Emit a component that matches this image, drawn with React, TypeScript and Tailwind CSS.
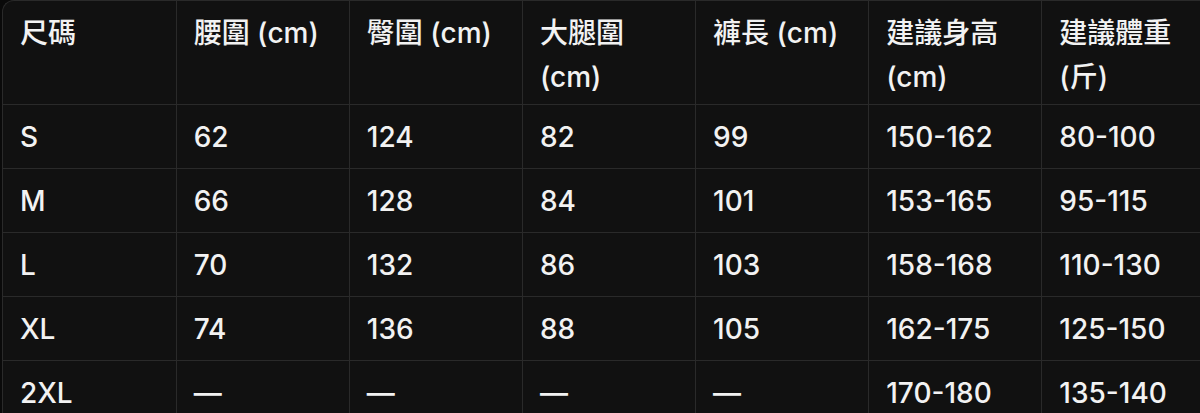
const headers: string[][] = [
  ["尺碼"],
  ["腰圍 (cm)"],
  ["臀圍 (cm)"],
  ["大腿圍", "(cm)"],
  ["褲長 (cm)"],
  ["建議身高", "(cm)"],
  ["建議體重", "(斤)"],
];

const rows: string[][] = [
  ["S", "62", "124", "82", "99", "150-162", "80-100"],
  ["M", "66", "128", "84", "101", "153-165", "95-115"],
  ["L", "70", "132", "86", "103", "158-168", "110-130"],
  ["XL", "74", "136", "88", "105", "162-175", "125-150"],
  ["2XL", "—", "—", "—", "—", "170-180", "135-140"],
];

export default function App() {
  return (
    <div
      className="w-[1200px] h-[413px] overflow-hidden bg-[#0a0a0a] text-[#f2f2f2]"
      style={{ fontFamily: '"Inter", "Noto Sans CJK TC", sans-serif' }}
    >
      <div className="ml-[2px] w-[1213px] rounded-tl-xl border-l border-t border-[#2a2a2a] bg-[#111111]">
        <table className="w-full table-fixed border-collapse text-[28px]">
          <thead>
            <tr className="border-b border-[#2a2a2a]">
              {headers.map((h, i) => (
                <th
                  key={i}
                  className={`h-[103px] px-[17px] pt-[10px] pb-[5px] text-left align-top font-medium leading-[44px] ${
                    i > 0 ? "border-l border-[#2a2a2a]" : ""
                  }`}
                >
                  {h.map((line, j) => (
                    <div key={j}>{line}</div>
                  ))}
                </th>
              ))}
            </tr>
          </thead>
          <tbody>
            {rows.map((r, ri) => (
              <tr key={ri} className="border-b border-[#2a2a2a]">
                {r.map((c, ci) => (
                  <td
                    key={ci}
                    className={`h-[64px] px-[17px] align-middle font-medium leading-[44px] ${
                      ci > 0 ? "border-l border-[#2a2a2a]" : ""
                    }`}
                  >
                    {c}
                  </td>
                ))}
              </tr>
            ))}
          </tbody>
        </table>
      </div>
    </div>
  );
}
